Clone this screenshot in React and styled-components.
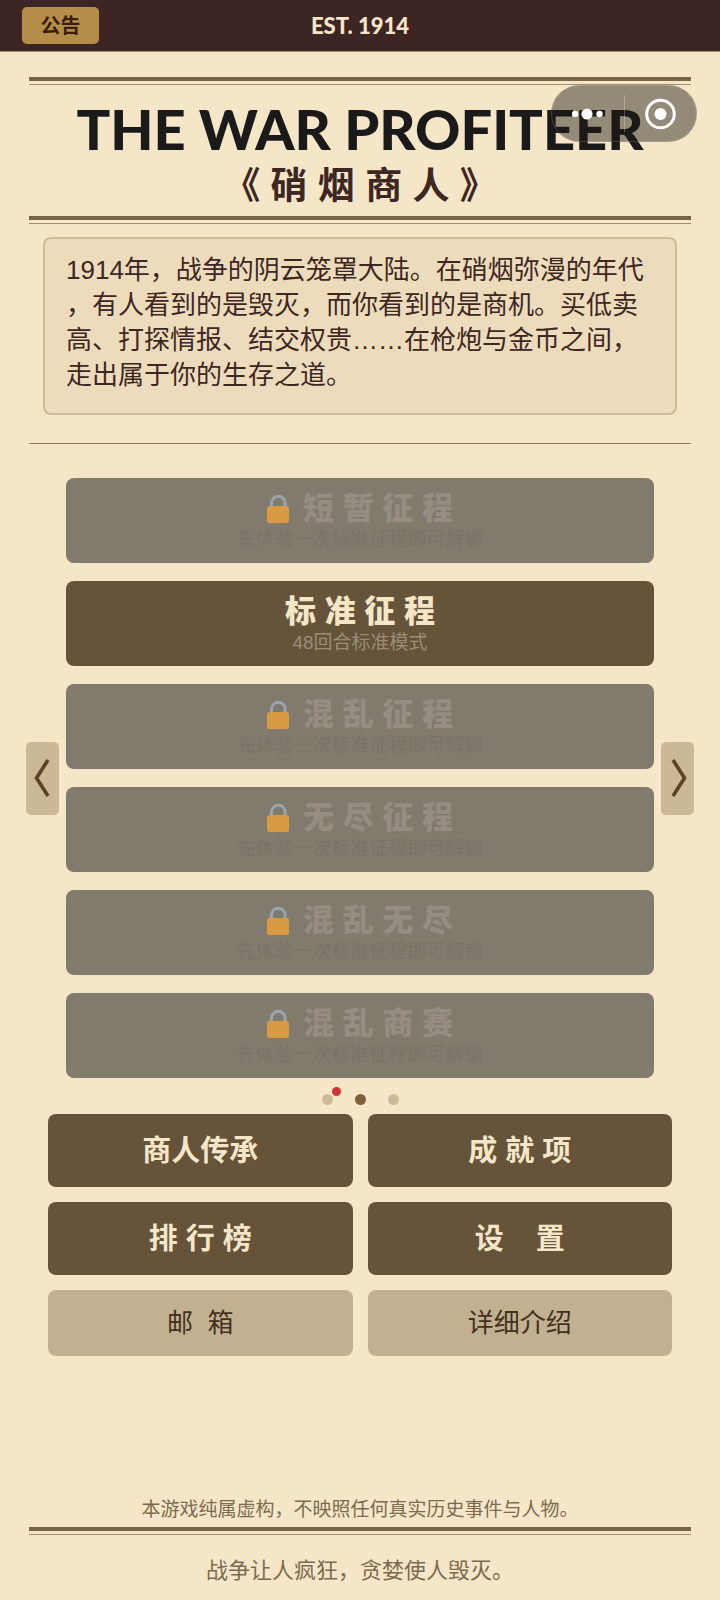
import React, { useState } from 'react';
import styled, { ThemeProvider, createGlobalStyle } from 'styled-components';

const theme = {
  colors: {
    paper: '#f5e6c8',
    header: '#3d2523',
    gold: '#b48e49',
    ink: '#1a1a1a',
    brown: '#65533a',
    text: '#3e2723',
    line: '#786548',
    lineLight: '#a08e6e',
    muted: '#7d6b4f',
  },
  fonts: {
    title: '"Lato", "Noto Sans CJK SC", sans-serif',
    body: '"Liberation Sans", "Noto Sans CJK SC", sans-serif',
  },
};

const GlobalStyle = createGlobalStyle`
  * { box-sizing: border-box; }
  body {
    margin: 0;
    background: ${theme.colors.paper};
    font-family: ${theme.fonts.body};
  }
  button {
    border: 0;
    padding: 0;
    cursor: pointer;
    font-family: inherit;
  }
  h1, h2, p { margin: 0; }
`;

// === 页面结构 ===

const Page = styled.div`
  position: relative;
  display: flex;
  flex-direction: column;
  min-height: 100vh;
  color: ${props => props.theme.colors.text};
`;

const TopBar = styled.header`
  display: grid;
  grid-template-columns: 1fr auto 1fr;
  align-items: center;
  height: 52px;
  padding: 0 22px;
  background: ${props => props.theme.colors.header};
  border-bottom: 1px solid ${props => props.theme.colors.lineLight};
`;

const NoticeButton = styled.button`
  justify-self: start;
  width: 77px;
  height: 37px;
  border-radius: 5px;
  background: ${props => props.theme.colors.gold};
  color: #3a1d0c;
  font-size: 20px;
  line-height: 24px;
  font-weight: 700;
`;

const Established = styled.span`
  color: ${props => props.theme.colors.paper};
  font-family: ${props => props.theme.fonts.title};
  font-size: 22px;
  font-weight: 900;
`;

// 报头双线：上粗下细
const DoubleRule = styled.div`
  height: 8px;
  margin: 0 29px;
  border-top: 4px solid ${props => props.theme.colors.line};
  border-bottom: 1px solid ${props => props.theme.colors.lineLight};
`;

const Masthead = styled.div`
  padding-top: 25px;
  text-align: center;
`;

const Title = styled.h1`
  padding-top: 14px;
  font-family: ${props => props.theme.fonts.title};
  font-size: 56px;
  line-height: 60px;
  font-weight: 900;
  color: ${props => props.theme.colors.ink};
  white-space: nowrap;
`;

const Subtitle = styled.h2`
  padding: 4px 0 5px;
  font-size: 37px;
  line-height: 48px;
  font-weight: 700;
`;

const Intro = styled.p`
  margin: 13px 43px 28px;
  padding: 14px 22px 20px 21px;
  border: 2px solid #cdba98;
  border-radius: 8px;
  background: #eddcbc;
  font-size: 26px;
  line-height: 35px;
  white-space: nowrap;

  span { display: block; }
`;

const ThinRule = styled.div`
  height: 1px;
  margin: 0 29px 34px;
  background: #8d7a5a;
`;

// === 模式列表 ===

const Stage = styled.section`
  display: flex;
  align-items: center;
  gap: 7px;
  padding: 0 26px;
`;

const ArrowButton = styled.button`
  display: flex;
  align-items: center;
  justify-content: center;
  flex: none;
  width: 33px;
  height: 73px;
  border-radius: 5px;
  background: #cbb995;
  color: #5a4325;
`;

const ModeList = styled.div`
  display: flex;
  flex: 1;
  flex-direction: column;
  gap: 18px;
`;

const ModeButton = styled.button`
  display: flex;
  flex-direction: column;
  align-items: center;
  justify-content: center;
  height: 85px;
  border-radius: 8px;
  background: ${props => (props.$locked ? '#817b6e' : props.theme.colors.brown)};
  color: ${props => (props.$locked ? '#968c81' : props.theme.colors.paper)};
`;

const ModeName = styled.span`
  display: flex;
  align-items: center;
  gap: 14px;
  font-size: 31px;
  line-height: 38px;
  font-weight: 900;
`;

const ModeHint = styled.span`
  font-size: 19px;
  line-height: 24px;
  color: ${props => (props.$locked ? '#7a7467' : '#9c8e76')};
`;

const Dots = styled.div`
  display: flex;
  justify-content: center;
  gap: 22px;
  padding: 16px 0 9px;
`;

const Dot = styled.button`
  position: relative;
  width: 11px;
  height: 11px;
  border-radius: 50%;
  background: ${props => (props.$active ? '#7d6238' : '#ccba98')};
`;

const RedDot = styled.span`
  position: absolute;
  top: -7px;
  left: 10px;
  width: 9px;
  height: 9px;
  border-radius: 50%;
  background: #d13438;
`;

// === 底部菜单 ===

const Menu = styled.nav`
  display: grid;
  grid-template-columns: 1fr 1fr;
  gap: 15px;
  padding: 0 48px;
`;

const MenuButton = styled.button`
  height: 73px;
  border-radius: 8px;
  background: ${props => props.theme.colors.brown};
  color: ${props => props.theme.colors.paper};
  font-size: 29px;
  line-height: 38px;
  font-weight: 700;
  white-space: pre;
`;

const PlainButton = styled(MenuButton)`
  height: 66px;
  background: #c2b190;
  color: #45301f;
  font-size: 26px;
  font-weight: 400;
`;

const Footer = styled.footer`
  margin-top: auto;
  text-align: center;
  color: ${props => props.theme.colors.muted};
`;

const Disclaimer = styled.p`
  padding-bottom: 3px;
  font-size: 19px;
  line-height: 28px;
`;

const Motto = styled.p`
  padding: 19px 0 12px;
  font-size: 22px;
  line-height: 34px;
`;

// 小程序右上角胶囊，浮在标题之上
const Capsule = styled.div`
  position: absolute;
  top: 85px;
  right: 23px;
  display: flex;
  align-items: center;
  width: 146px;
  height: 57px;
  border: 1px solid rgba(255, 255, 255, 0.15);
  border-radius: 29px;
  background: rgba(30, 27, 22, 0.45);
`;

const CapsuleButton = styled.button`
  display: flex;
  flex: 1;
  align-items: center;
  justify-content: center;
  height: 100%;
  background: transparent;
`;

const CapsuleDivider = styled.span`
  width: 1px;
  height: 37px;
  background: rgba(255, 255, 255, 0.25);
`;

const LockIcon = () => (
  <svg width="22" height="30" viewBox="0 0 22 30" aria-hidden="true">
    <path d="M4.5 14V9a6.8 6.8 0 0 1 13.6 0v5" fill="none" stroke="#9ba3ac" strokeWidth="3" />
    <rect x="0" y="12" width="22" height="17" rx="2.5" fill="#da9a42" />
  </svg>
);

const Chevron = ({ flip }) => (
  <svg width="18" height="40" viewBox="0 0 18 40" aria-hidden="true">
    <path
      d={flip ? 'M4 2L15.5 20L4 38' : 'M14 2L2.5 20L14 38'}
      fill="none"
      stroke="currentColor"
      strokeWidth="3.6"
    />
  </svg>
);

const introLines = [
  '1914年，战争的阴云笼罩大陆。在硝烟弥漫的年代',
  '，有人看到的是毁灭，而你看到的是商机。买低卖',
  '高、打探情报、结交权贵……在枪炮与金币之间，',
  '走出属于你的生存之道。',
];

const lockedHint = '先体验一次标准征程即可解锁';

const modes = [
  { name: '短 暂 征 程', hint: lockedHint, locked: true },
  { name: '标 准 征 程', hint: '48回合标准模式', locked: false },
  { name: '混 乱 征 程', hint: lockedHint, locked: true },
  { name: '无 尽 征 程', hint: lockedHint, locked: true },
  { name: '混 乱 无 尽', hint: lockedHint, locked: true },
  { name: '混 乱 商 赛', hint: lockedHint, locked: true },
];

const App = () => {
  const [page, setPage] = useState(1);

  return (
    <ThemeProvider theme={theme}>
      <GlobalStyle />
      <Page>
        <TopBar>
          <NoticeButton>公告</NoticeButton>
          <Established>EST. 1914</Established>
        </TopBar>

        <Masthead>
          <DoubleRule />
          <Title>THE WAR PROFITEER</Title>
          <Subtitle>《 硝 烟 商 人 》</Subtitle>
          <DoubleRule />
        </Masthead>

        <Intro>
          {introLines.map(line => <span key={line}>{line}</span>)}
        </Intro>
        <ThinRule />

        <Stage>
          <ArrowButton aria-label="上一页" onClick={() => setPage(Math.max(0, page - 1))}>
            <Chevron />
          </ArrowButton>
          <ModeList>
            {modes.map(mode => (
              <ModeButton key={mode.name} $locked={mode.locked} disabled={mode.locked}>
                <ModeName>
                  {mode.locked && <LockIcon />}
                  {mode.name}
                </ModeName>
                <ModeHint $locked={mode.locked}>{mode.hint}</ModeHint>
              </ModeButton>
            ))}
          </ModeList>
          <ArrowButton aria-label="下一页" onClick={() => setPage(Math.min(2, page + 1))}>
            <Chevron flip />
          </ArrowButton>
        </Stage>

        <Dots>
          {[0, 1, 2].map(index => (
            <Dot
              key={index}
              $active={index === page}
              aria-label={`第${index + 1}页`}
              onClick={() => setPage(index)}
            >
              {index === 0 && <RedDot />}
            </Dot>
          ))}
        </Dots>

        <Menu>
          <MenuButton>商人传承</MenuButton>
          <MenuButton>成 就 项</MenuButton>
          <MenuButton>排 行 榜</MenuButton>
          <MenuButton>{'设    置'}</MenuButton>
          <PlainButton>{'邮  箱'}</PlainButton>
          <PlainButton>详细介绍</PlainButton>
        </Menu>

        <Footer>
          <Disclaimer>本游戏纯属虚构，不映照任何真实历史事件与人物。</Disclaimer>
          <DoubleRule />
          <Motto>战争让人疯狂，贪婪使人毁灭。</Motto>
        </Footer>

        <Capsule>
          <CapsuleButton aria-label="更多">
            <svg width="32" height="12" viewBox="0 0 32 12" fill="#fff">
              <circle cx="3" cy="6" r="3.2" />
              <circle cx="15" cy="6" r="5.6" />
              <circle cx="27.5" cy="6" r="3.2" />
            </svg>
          </CapsuleButton>
          <CapsuleDivider />
          <CapsuleButton aria-label="关闭">
            <svg width="32" height="32" viewBox="0 0 32 32">
              <circle cx="16.5" cy="16" r="13.8" fill="none" stroke="#fff" strokeWidth="3" />
              <circle cx="16.5" cy="16" r="6" fill="#fff" />
            </svg>
          </CapsuleButton>
        </Capsule>
      </Page>
    </ThemeProvider>
  );
};

export default App;
